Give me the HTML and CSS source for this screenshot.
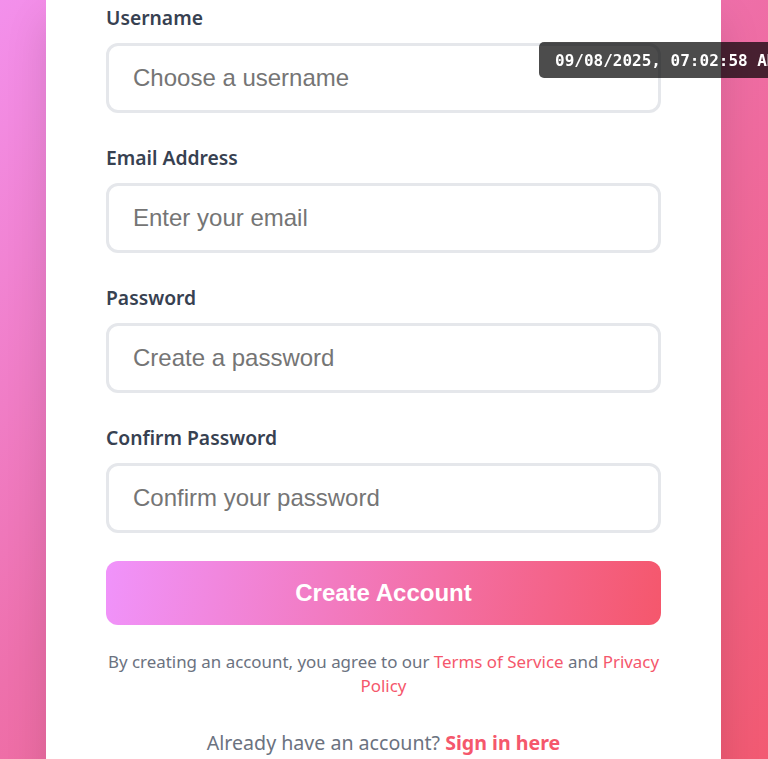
FILE: index.html
```html
<!DOCTYPE html>
<html lang="en">
<head>
<meta charset="utf-8">
<title>Create Account</title>
<link rel="stylesheet" href="styles.css">
</head>
<body>
<div class="page">
  <div class="card">
    <form class="form">
      <div class="group">
        <label class="label" for="u">Username</label>
        <input class="input" id="u" type="text" placeholder="Choose a username">
      </div>
      <div class="group">
        <label class="label" for="e">Email Address</label>
        <input class="input" id="e" type="email" placeholder="Enter your email">
      </div>
      <div class="group">
        <label class="label" for="p">Password</label>
        <input class="input" id="p" type="password" placeholder="Create a password">
      </div>
      <div class="group last">
        <label class="label" for="c">Confirm Password</label>
        <input class="input" id="c" type="password" placeholder="Confirm your password">
      </div>
      <button class="btn" type="button">Create Account</button>
      <p class="terms">By creating an account, you agree to our <a href="#">Terms of Service</a> and <a href="#">Privacy Policy</a></p>
      <p class="signin">Already have an account? <a href="#">Sign in here</a></p>
    </form>
  </div>
</div>
<div class="stamp">09/08/2025, 07:02:58 AM</div>
</body>
</html>
```

FILE: styles.css
```css
html, body {
  margin: 0;
  padding: 0;
  height: 759px;
  overflow: hidden;
}
body {
  background: linear-gradient(135deg, #f390ec 0%, #ee70ac 45%, #f25a72 100%);
  font-family: "Noto Sans", "Open Sans", sans-serif;
}
.page {
  padding: 0 47px 0 46px;
}
.card {
  background: #ffffff;
  box-shadow: 0 20px 40px rgba(0, 0, 0, 0.12);
  padding: 5px 60px 40px;
  min-height: 800px;
}
.form {
  display: flex;
  flex-direction: column;
}
.group {
  display: flex;
  flex-direction: column;
  margin-bottom: 32px;
}
.group.last {
  margin-bottom: 28px;
}
.label {
  font-size: 19.3px;
  line-height: 26px;
  font-weight: 600;
  color: #374151;
  margin-bottom: 12px;
}
.input {
  box-sizing: border-box;
  height: 70px;
  width: 100%;
  border: 3px solid #e5e7eb;
  border-radius: 12px;
  padding: 0 24px;
  font-family: "Liberation Sans", Arial, sans-serif;
  font-size: 24px;
  color: #111827;
  outline: none;
  background: #fff;
}
.input::placeholder {
  color: #757575;
}
.btn {
  height: 64px;
  border: none;
  border-radius: 12px;
  background: linear-gradient(100deg, #f093fb 0%, #f5576c 100%);
  color: #ffffff;
  font-family: "Liberation Sans", Arial, sans-serif;
  font-weight: 700;
  font-size: 24px;
  cursor: pointer;
}
.terms {
  margin: 25px 0 0;
  text-align: center;
  font-size: 16.9px;
  line-height: 24px;
  color: #6b7280;
}
.terms a, .signin a {
  color: #f5576c;
  text-decoration: none;
}
.signin {
  margin: 32px 0 0;
  text-align: center;
  font-size: 19.6px;
  line-height: 26px;
  color: #6b7280;
}
.signin a {
  font-weight: 700;
}
.stamp {
  position: fixed;
  top: 42px;
  left: 539px;
  height: 36px;
  box-sizing: border-box;
  padding: 0 16px;
  display: flex;
  align-items: center;
  background: rgba(0, 0, 0, 0.7);
  color: #ffffff;
  border-radius: 5px;
  font-family: "DejaVu Sans Mono", monospace;
  font-size: 16px;
  font-weight: 700;
  white-space: nowrap;
}
```
